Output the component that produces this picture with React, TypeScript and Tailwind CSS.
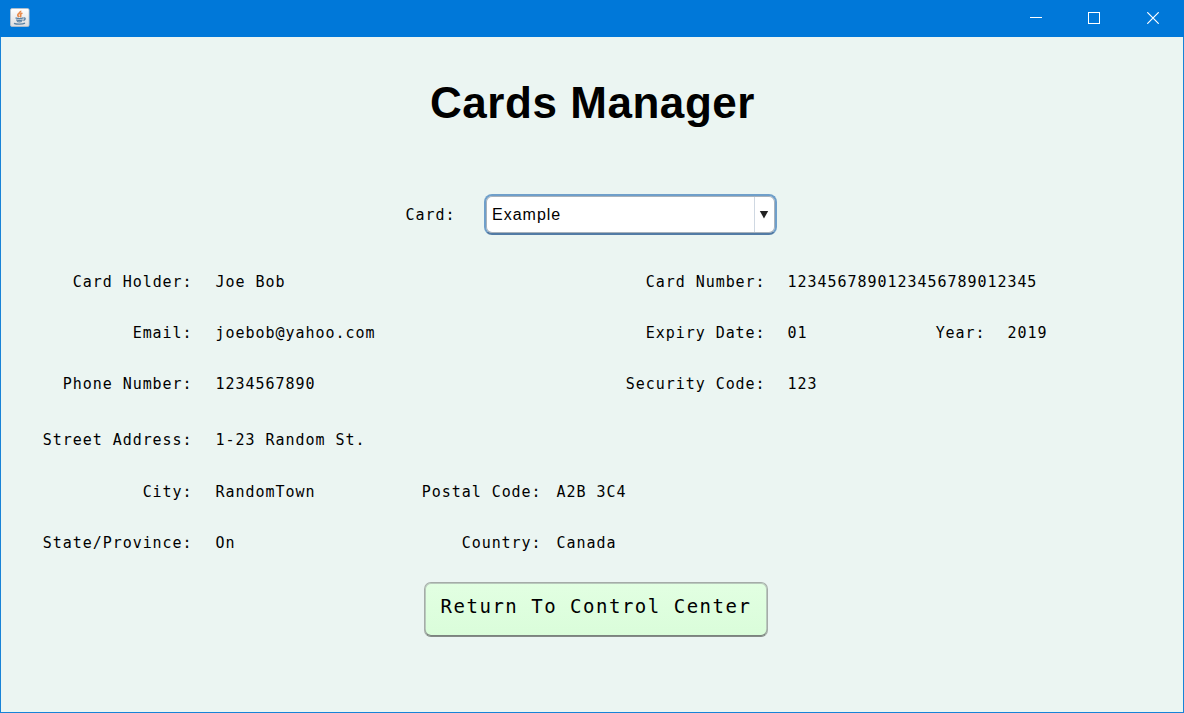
import React, { useState } from "react";

function JavaIcon() {
  return (
    <svg width="20" height="20" viewBox="0 0 20 20" aria-hidden="true">
      <defs>
        <linearGradient id="tile" x1="0" y1="0" x2="0" y2="1">
          <stop offset="0" stopColor="#ffffff" />
          <stop offset="1" stopColor="#dcdddf" />
        </linearGradient>
      </defs>
      <rect x="0.5" y="0.5" width="18.6" height="18" rx="1.5" fill="url(#tile)" stroke="#b9bfc6" strokeWidth="0.8" />
      <path d="M10.600 2.800c.6 2-3.200 2.600-2.800 4.400.2.900.9 1.300 1.300 1.800M12.400 5c-1.700.7-2.500 1.500-1.700 2.500.4.700-.1 1.200-.6 1.600" fill="none" stroke="#e8894a" strokeWidth="1.700" />
      <path d="M5.500 9.800c2 .8 5.800.8 7.800 0M6.200 11.800c2 .7 4.800.7 6.400 0M6.900 13.500c1.500.5 3.500.5 4.900 0M13.600 10c2.200-.4 2 1.900-.2 2.500M4 15.300c2.700 1.200 8.400 1.100 11-.2" fill="none" stroke="#5b82a4" strokeWidth="1.300" />
    </svg>
  );
}

function TitleBar() {
  return (
    <header className="flex h-[37px] shrink-0 items-start justify-between bg-[#0078d9]">
      <div className="pt-2 pl-[10px]">
        <JavaIcon />
      </div>
      <div className="flex text-white">
        <button className="flex h-9 w-[58px] items-center justify-center" aria-label="Minimize">
          <svg width="12" height="12" viewBox="0 0 12 12"><path d="M0 5.500H12" stroke="currentColor" /></svg>
        </button>
        <button className="flex h-9 w-[58px] items-center justify-center" aria-label="Maximize">
          <svg width="12" height="12" viewBox="0 0 12 12"><rect x=".5" y=".5" width="11" height="11" fill="none" stroke="currentColor" /></svg>
        </button>
        <button className="flex h-9 w-[61px] items-center justify-center pr-px" aria-label="Close">
          <svg width="12" height="12" viewBox="0 0 12 12"><path d="M.3.3 11.700 11.700M11.700.3.300 11.700" stroke="currentColor" strokeWidth="1.200" /></svg>
        </button>
      </div>
    </header>
  );
}

function Field({ label, value, labelClass, gapClass }: { label: string; value: string; labelClass: string; gapClass: string }) {
  return (
    <div className={`flex ${gapClass}`}>
      <span className={`shrink-0 text-right ${labelClass}`}>{label}</span>
      <span>{value}</span>
    </div>
  );
}

function LeftField({ label, value }: { label: string; value: string }) {
  return (
    <div className="w-[400px] shrink-0">
      <Field label={label} value={value} labelClass="w-[191px]" gapClass="gap-[23px]" />
    </div>
  );
}

function RightField({ label, value }: { label: string; value: string }) {
  return (
    <div className="w-[500px] shrink-0">
      <Field label={label} value={value} labelClass="w-[364px]" gapClass="gap-[22px]" />
    </div>
  );
}

export default function App() {
  const [card] = useState("Example");
  return (
    <div className="flex h-[713px] w-[1184px] flex-col overflow-hidden bg-[#ebf5f2] text-black">
      <TitleBar />
      <main className="flex flex-1 flex-col border-x border-b border-[#1883d7] whitespace-pre">
        <h1 className="mt-[38px] pl-px text-center font-['Liberation_Sans',sans-serif] text-[44px] leading-[56px] font-bold tracking-[0.550px]">Cards Manager</h1>

        <div className="mt-[63px] flex h-[41px] items-center pl-[404.600px] font-['DejaVu_Sans_Mono',monospace] text-[15px] tracking-[0.950px]">
          <span className="w-[78.400px] pt-[2px]">Card:</span>
          <div className="flex h-[41px] w-[293px] rounded-[8px] border-2 border-[#6f9fca] border-b-[#527ba5] bg-white p-px shadow-[inset_0_0_0_1px_#a9b2bb]">
            <div className="flex flex-1 items-center pl-[5px] font-['Liberation_Sans',sans-serif] text-[16px] tracking-[1px]">{card}</div>
            <div className="flex w-[20px] items-center justify-center border-l border-[#cfd8e2]">
              <svg width="10" height="8" viewBox="0 0 10 8"><path d="M.8 0H9.200L5 7.500Z" fill="#222" /></svg>
            </div>
          </div>
        </div>

        <section className="mt-[21px] pl-[0.600px] font-['DejaVu_Sans_Mono',monospace] text-[15px] leading-[20px] tracking-[0.960px]">
          <div className="flex h-[51px] items-center">
            <LeftField label="Card Holder:" value="Joe Bob" />
            <RightField label="Card Number:" value="1234567890123456789012345" />
          </div>
          <div className="flex h-[51px] items-center">
            <LeftField label="Email:" value="joebob@yahoo.com" />
            <RightField label="Expiry Date:" value="01" />
            <Field label="Year:" value="2019" labelClass="w-[84px]" gapClass="gap-[22px]" />
          </div>
          <div className="flex h-[51px] items-center">
            <LeftField label="Phone Number:" value="1234567890" />
            <RightField label="Security Code:" value="123" />
          </div>
          <div className="mt-[5px] flex h-[51px] items-center">
            <LeftField label="Street Address:" value="1-23 Random St." />
          </div>
          <div className="mt-px flex h-[51px] items-center">
            <LeftField label="City:" value="RandomTown" />
            <Field label="Postal Code:" value="A2B 3C4" labelClass="w-[140px]" gapClass="gap-[15px]" />
          </div>
          <div className="flex h-[51px] items-center">
            <LeftField label="State/Province:" value="On" />
            <Field label="Country:" value="Canada" labelClass="w-[140px]" gapClass="gap-[15px]" />
          </div>
        </section>

        <button className="mt-[14px] ml-[423px] flex h-[55px] w-[344px] justify-center rounded-[7px] border border-[#a5aca8] border-b-[#848b87] bg-linear-to-b from-[#e2ffe2] to-[#dafdda] pt-[9px] font-['DejaVu_Sans_Mono',monospace] text-[19px] leading-[28px] tracking-[1.510px] shadow-[inset_0_-1px_0_#7b837e,inset_0_0_0_1px_#b9c9bd]">
          Return To Control Center
        </button>
      </main>
    </div>
  );
}
